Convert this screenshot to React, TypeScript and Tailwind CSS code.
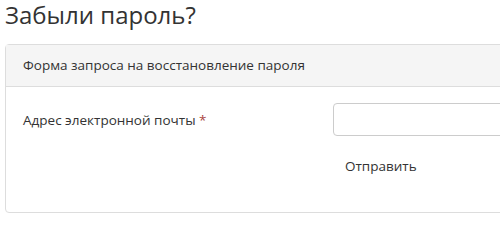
export default function App() {
  return (
    <div className="h-[229px] w-[500px] overflow-hidden bg-white text-[#333] [font-family:'Open_Sans',sans-serif]">
      <h1 className="pl-[5px] text-[24px] leading-[29px] font-normal">Забыли пароль?</h1>

      <div className="ml-[5px] mt-[15px] w-[520px] rounded-[4px] border border-[#ddd] bg-white">
        <div className="h-[42px] border-b border-[#ddd] bg-[#f5f5f5] px-[17px] text-[13.5px] leading-[41px]">
          Форма запроса на восстановление пароля
        </div>

        <div className="px-[17px] pt-[16px] pb-[29px]">
          <div className="flex items-center">
            <label className="w-[310px] shrink-0 text-[13.5px] leading-[20px]">
              Адрес электронной почты <span className="text-[#a94442]">*</span>
            </label>
            <input
              type="email"
              className="h-[33px] min-w-0 flex-1 rounded-[4px] border border-[#ccc] bg-white px-3 text-[14px] outline-none"
            />
          </div>

          <div className="mt-[13px] flex">
            <div className="w-[310px] shrink-0" />
            <button className="h-[34px] px-[12px] text-[13.5px] leading-[20px] text-[#333]">
              Отправить
            </button>
          </div>
        </div>
      </div>
    </div>
  )
}
